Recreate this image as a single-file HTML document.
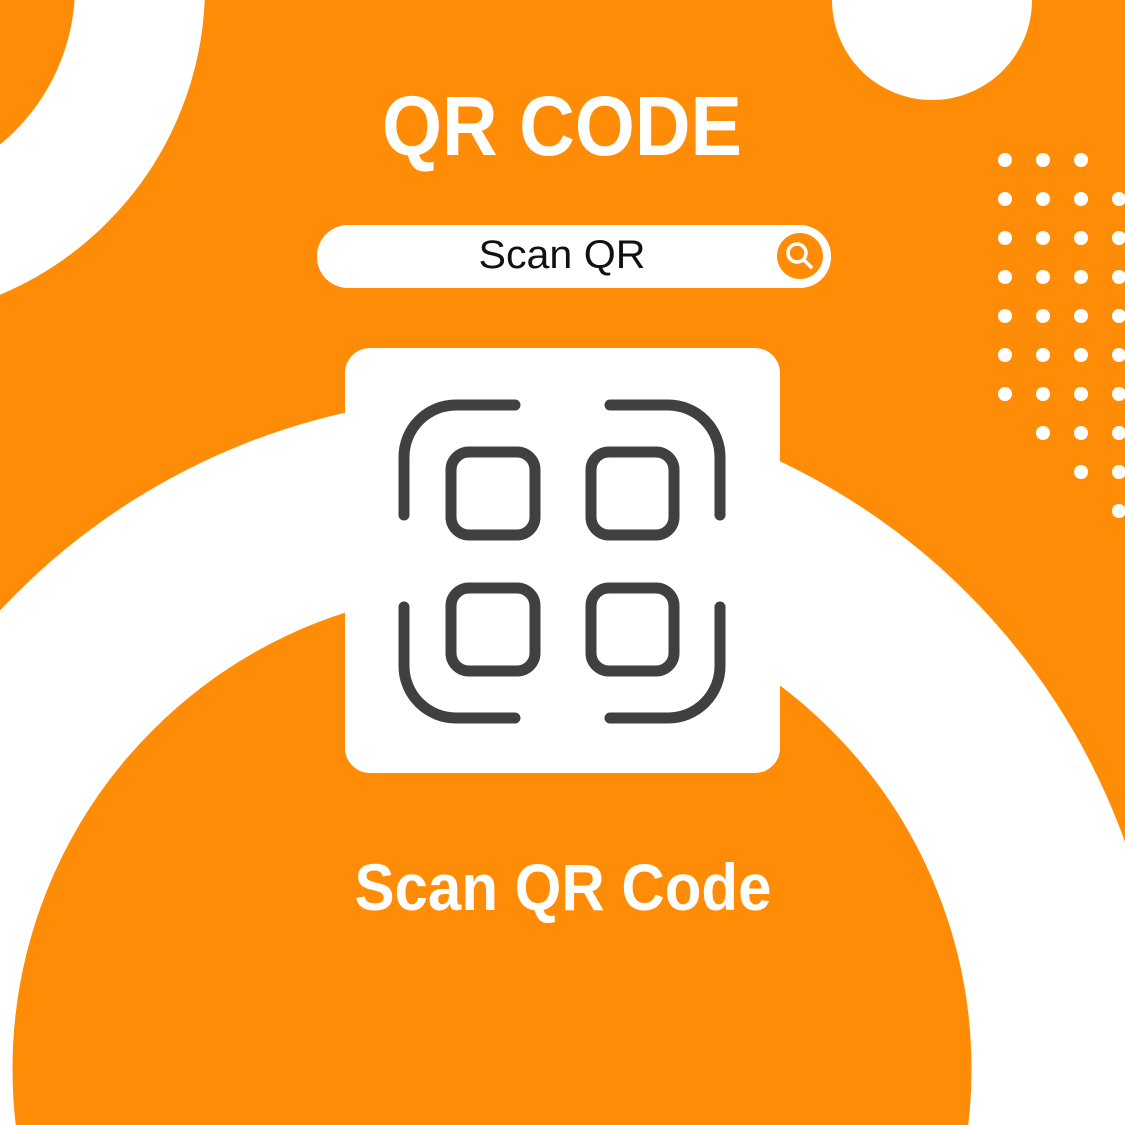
<!DOCTYPE html>
<html><head><meta charset="utf-8"><style>
html,body{margin:0;padding:0;width:1125px;height:1125px;overflow:hidden;background:#FF8C07;position:relative}
svg{display:block;position:absolute;top:0;left:0;overflow:hidden}
</style></head><body>
<svg width="1125" height="1125" viewBox="0 0 1125 1125" xmlns="http://www.w3.org/2000/svg">
<rect width="1125" height="1125" fill="#FF8C07"/>
<circle cx="-130" cy="-14" r="270" fill="none" stroke="#fff" stroke-width="130"/>
<circle cx="932" cy="0" r="100" fill="#fff"/>
<circle cx="492" cy="1069" r="576" fill="none" stroke="#fff" stroke-width="193"/>
<g fill="#fff">
<circle cx="1005" cy="160" r="7"/><circle cx="1043" cy="160" r="7"/><circle cx="1081" cy="160" r="7"/>
<g id="r"><circle cx="1005" cy="199" r="7"/><circle cx="1043" cy="199" r="7"/><circle cx="1081" cy="199" r="7"/><circle cx="1119" cy="199" r="7"/></g>
<use href="#r" y="39"/><use href="#r" y="78"/><use href="#r" y="117"/><use href="#r" y="156"/><use href="#r" y="195"/>
<circle cx="1043" cy="433" r="7"/><circle cx="1081" cy="433" r="7"/><circle cx="1119" cy="433" r="7"/>
<circle cx="1081" cy="472" r="7"/><circle cx="1119" cy="472" r="7"/>
<circle cx="1119" cy="511" r="7"/>
</g>
<text x="562" y="155" text-anchor="middle" font-family="Liberation Sans, sans-serif" font-weight="bold" font-size="84" fill="#fff" textLength="360" lengthAdjust="spacingAndGlyphs">QR CODE</text>
<rect x="317" y="225" width="514" height="63" rx="31" fill="#fff"/>
<text x="562" y="268" text-anchor="middle" font-family="Liberation Sans, sans-serif" font-size="40" fill="#111" textLength="167" lengthAdjust="spacingAndGlyphs">Scan QR</text>
<circle cx="800" cy="256" r="23" fill="#FF8C07"/>
<circle cx="797" cy="253" r="9" fill="none" stroke="#fff" stroke-width="3.5"/>
<line x1="804" y1="260" x2="811" y2="267" stroke="#fff" stroke-width="3.5" stroke-linecap="round"/>
<rect x="345" y="348" width="435" height="425" rx="25" fill="#fff"/>
<g fill="none" stroke="#404040" stroke-width="11" stroke-linecap="round">
<path d="M404 515 V457 A52 52 0 0 1 456 405 H515"/>
<path d="M610 405 H668 A52 52 0 0 1 720 457 V515"/>
<path d="M404 607 V666 A52 52 0 0 0 456 718 H515"/>
<path d="M610 718 H668 A52 52 0 0 0 720 666 V607"/>
<rect x="451" y="452" width="84" height="83" rx="18"/>
<rect x="591" y="452" width="83" height="83" rx="18"/>
<rect x="451" y="588" width="84" height="83" rx="18"/>
<rect x="591" y="588" width="83" height="83" rx="18"/>
</g>
<text x="563" y="910" text-anchor="middle" font-family="Liberation Sans, sans-serif" font-weight="bold" font-size="66" fill="#fff" textLength="417" lengthAdjust="spacingAndGlyphs">Scan QR Code</text>
</svg>
</body></html>
